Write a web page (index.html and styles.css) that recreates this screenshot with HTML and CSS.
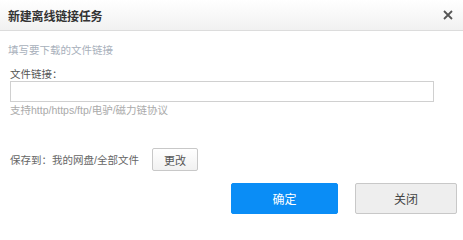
FILE: index.html
```html
<!DOCTYPE html>
<html lang="zh-CN">
<head>
<meta charset="utf-8">
<title>新建离线链接任务</title>
<link rel="stylesheet" href="styles.css">
</head>
<body>
<div class="dialog">
  <div class="header">
    <span class="title">新建离线链接任务</span>
    <span class="close" aria-label="关闭">
      <svg width="10" height="10" viewBox="0 0 10 10"><path d="M1 1 L9 9 M9 1 L1 9" stroke="#555" stroke-width="1.8" fill="none"/></svg>
    </span>
  </div>
  <div class="content">
    <div class="hint">填写要下载的文件链接</div>
    <div class="label">文件链接：</div>
    <input class="url" type="text">
    <div class="support">支持http/https/ftp/电驴/磁力链协议</div>
    <div class="save-row">
      <span class="save-text">保存到：我的网盘/全部文件</span>
      <button class="btn-change">更改</button>
    </div>
  </div>
  <div class="footer">
    <button class="btn btn-ok">确定</button>
    <button class="btn btn-cancel">关闭</button>
  </div>
</div>
</body>
</html>
```

FILE: styles.css
```css
html, body {
  margin: 0;
  padding: 0;
  background: #ffffff;
}
body {
  font-family: "Liberation Sans", "Noto Sans CJK SC", sans-serif;
  font-size: 10.5px;
  color: #555;
}
.dialog {
  width: 463px;
  height: 224px;
  background: #fff;
}
.header {
  height: 30px;
  border-bottom: 1px solid #dcdcdc;
  background: linear-gradient(#ffffff, #f1f1f1);
  display: flex;
  align-items: center;
  justify-content: space-between;
  padding: 0 10px 0 8px;
}
.title {
  font-size: 12px;
  font-weight: bold;
  color: #333;
  letter-spacing: -0.2px;
}
.close {
  display: flex;
  align-items: center;
}
.content {
  padding: 0 29px 0 10px;
}
.hint {
  margin-top: 11px;
  margin-left: -2px;
  line-height: 16px;
  color: #a8b0bb;
  font-size: 10.5px;
}
.label {
  margin-top: 9px;
  line-height: 14px;
  color: #555;
}
.url {
  display: block;
  box-sizing: border-box;
  width: 424px;
  height: 21px;
  margin: 0;
  border: 1px solid #d0d0d0;
  padding: 0 4px;
  outline: none;
}
.support {
  line-height: 16px;
  color: #aaa;
}
.save-row {
  margin-top: 30px;
  display: flex;
  align-items: center;
  height: 23px;
}
.save-text {
  color: #666;
  width: 142px;
}
.btn-change {
  box-sizing: border-box;
  width: 46px;
  height: 23px;
  border: 1px solid #c8c8c8;
  border-radius: 2px;
  background: linear-gradient(#ffffff, #f1f1f1);
  font-family: inherit;
  font-size: 11px;
  color: #555;
  padding: 0;
}
.footer {
  margin-top: 12px;
  display: flex;
  justify-content: flex-end;
  gap: 17px;
  padding-right: 6px;
}
.btn {
  box-sizing: border-box;
  height: 31px;
  border-radius: 2px;
  font-family: inherit;
  font-size: 12px;
  padding: 0;
}
.btn-ok {
  width: 107px;
  background: #0a8df6;
  border: 1px solid #0a8df6;
  color: #fff;
}
.btn-cancel {
  width: 102px;
  background: #eeeeee;
  border: 1px solid #c8c8c8;
  color: #444;
}
```
